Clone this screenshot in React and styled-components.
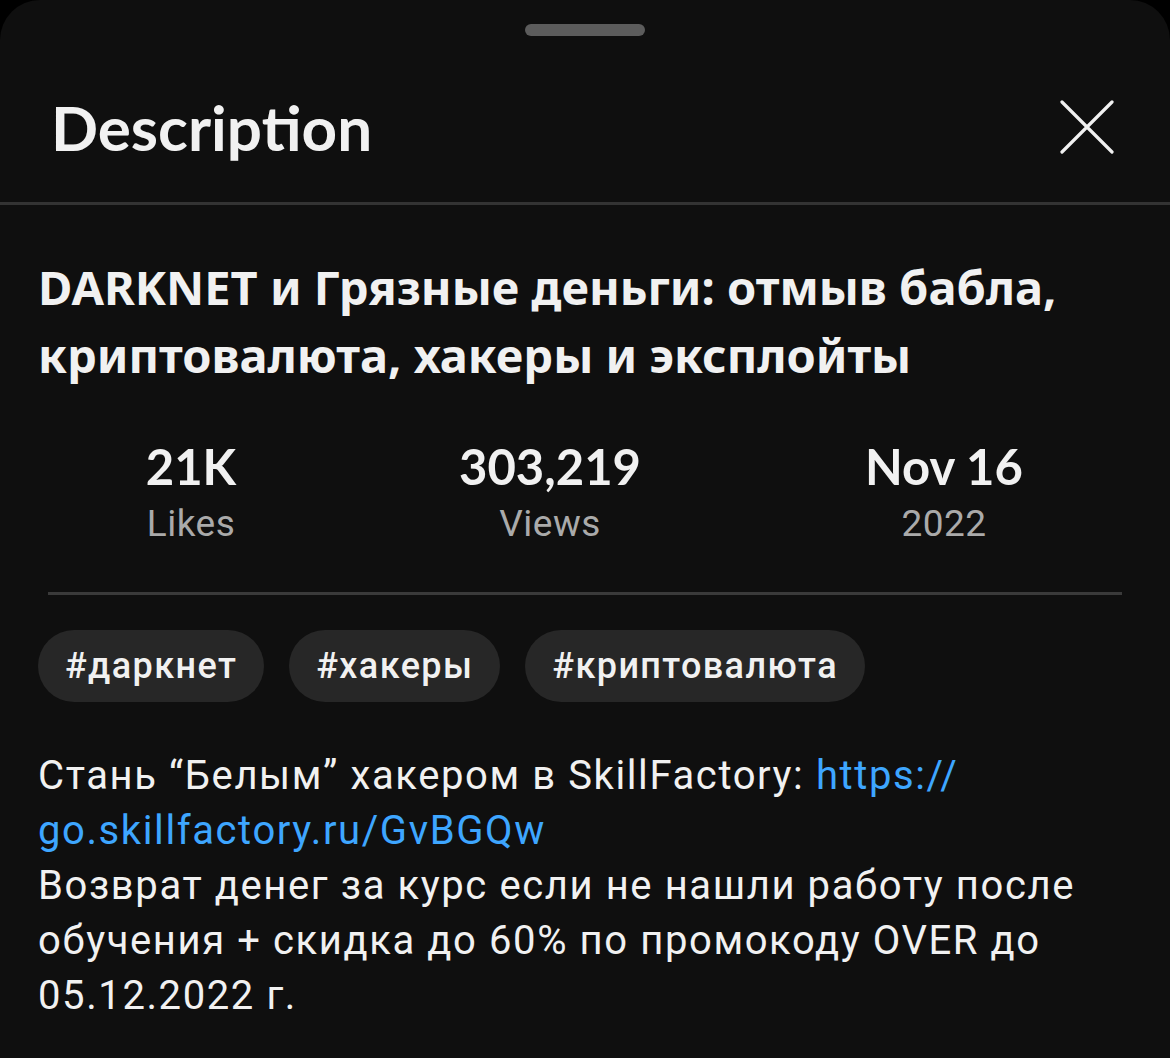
import React from "react";
import styled, { createGlobalStyle } from "styled-components";

const GlobalStyle = createGlobalStyle`
  html, body {
    margin: 0;
    padding: 0;
    background: #000;
  }
  * {
    box-sizing: border-box;
  }
`;

//  Styled Consts
const Sheet = styled.div`
  width: 1170px;
  min-height: 1058px;
  background: #0f0f0f;
  border-radius: 40px 40px 0 0;
  color: #f1f1f1;
  overflow: hidden;
`;

const HandleRow = styled.div`
  display: flex;
  justify-content: center;
  padding-top: 24px;
`;

const Handle = styled.div`
  width: 120px;
  height: 12px;
  border-radius: 6px;
  background: #5c5c5c;
`;

const Header = styled.div`
  display: flex;
  align-items: center;
  justify-content: space-between;
  height: 169px;
  padding: 16px 56px 0 51px;
  border-bottom: 3px solid #333;
`;

const Heading = styled.h1`
  margin: 0;
  font-family: "Lato", "Noto Sans", sans-serif;
  font-weight: 700;
  font-size: 62px;
  color: #f1f1f1;
`;

const CloseButton = styled.button`
  display: flex;
  padding: 0;
  border: none;
  background: none;
  cursor: pointer;
`;

const Body = styled.div`
  padding: 48px 38px 0 38px;
`;

const Title = styled.h2`
  margin: 0;
  font-family: "Noto Sans", sans-serif;
  font-weight: 700;
  font-size: 47px;
  line-height: 68px;
  color: #f1f1f1;
`;

const Stats = styled.div`
  display: grid;
  grid-template-columns: 286px 432px 1fr;
  margin: 48px 10px 0 10px;
  padding-bottom: 47px;
  border-bottom: 3px solid #3a3a3a;
`;

const Stat = styled.div`
  display: flex;
  flex-direction: column;
  align-items: center;
`;

const StatValue = styled.span`
  font-family: "Lato", "Noto Sans", sans-serif;
  font-weight: 700;
  font-size: 49px;
  line-height: 58px;
  color: #f1f1f1;
`;

const StatLabel = styled.span`
  margin-top: 8px;
  font-family: "Roboto", sans-serif;
  font-size: 37px;
  line-height: 42px;
  letter-spacing: 0.5px;
  color: #aaa;
`;

const Tags = styled.div`
  display: flex;
  gap: 25px;
  margin-top: 35px;
`;

const Tag = styled.span`
  display: inline-flex;
  align-items: center;
  height: 72px;
  padding: 0 27px;
  border-radius: 36px;
  background: #272727;
  font-family: "Roboto", sans-serif;
  font-weight: 500;
  font-size: 36px;
  letter-spacing: 1.4px;
  color: #f1f1f1;
`;

const Description = styled.p`
  margin: 46px 0 0 0;
  font-family: "Roboto", sans-serif;
  font-size: 40px;
  line-height: 55px;
  letter-spacing: 1.6px;
  color: #f1f1f1;
`;

const Link = styled.a`
  color: #3ea6ff;
  text-decoration: none;
`;

const CloseIcon = () => (
  <svg width="54" height="54" viewBox="0 0 54 54">
    <path d="M2 2 L52 52 M52 2 L2 52" stroke="#f1f1f1" strokeWidth="3.2" strokeLinecap="round" />
  </svg>
);

const stats = [
  { value: "21K", label: "Likes" },
  { value: "303,219", label: "Views" },
  { value: "Nov 16", label: "2022" }
];

const tags = ["#даркнет", "#хакеры", "#криптовалюта"];

const App = () => (
  <React.Fragment>
    <GlobalStyle />
    <Sheet>
      <HandleRow>
        <Handle />
      </HandleRow>
      <Header>
        <Heading>Description</Heading>
        <CloseButton aria-label="Close">
          <CloseIcon />
        </CloseButton>
      </Header>
      <Body>
        <Title>
          DARKNET и Грязные деньги: отмыв бабла, криптовалюта, хакеры и эксплойты
        </Title>
        <Stats>
          {stats.map(stat => (
            <Stat key={stat.label}>
              <StatValue>{stat.value}</StatValue>
              <StatLabel>{stat.label}</StatLabel>
            </Stat>
          ))}
        </Stats>
        <Tags>
          {tags.map(tag => (
            <Tag key={tag}>{tag}</Tag>
          ))}
        </Tags>
        <Description>
          Стань “Белым” хакером в SkillFactory:{" "}
          <Link href="#">
            https://
            <wbr />
            go.skillfactory.ru/GvBGQw
          </Link>
          <br />
          Возврат денег за курс если не нашли работу после обучения + скидка до
          60% по промокоду OVER до 05.12.2022 г.
        </Description>
      </Body>
    </Sheet>
  </React.Fragment>
);

export default App;
